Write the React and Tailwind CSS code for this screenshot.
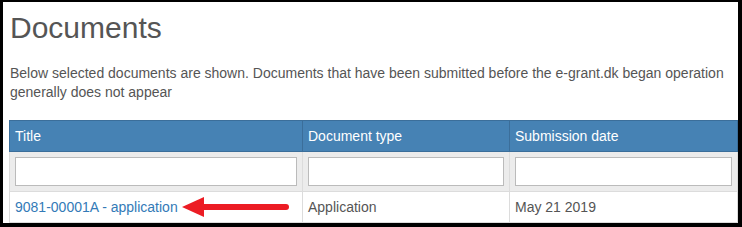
export default function App() {
  return (
    <div className="w-[742px] h-[227px] bg-black pl-[3px] pt-[2px] pr-[4px] pb-[4px]" style={{ fontFamily: '"Liberation Sans", Arial, sans-serif' }}>
      <div className="w-full h-full bg-white pl-[6px] pr-[1px] overflow-hidden">
        <h1 className="text-[30px] leading-[33px] text-[#555] pt-[9px] pl-[1px] m-0 font-normal">Documents</h1>
        <p className="text-[14px] leading-[19px] text-[#555] mt-[20px] mb-0 pl-[1px]">
          Below selected documents are shown. Documents that have been submitted before the e-grant.dk began operation generally does not appear
        </p>
        <table className="mt-[18px] w-[728px] border-collapse table-fixed text-[14px]">
          <colgroup>
            <col className="w-[293px]" />
            <col className="w-[207px]" />
            <col className="w-[228px]" />
          </colgroup>
          <thead>
            <tr className="bg-[#4682b4] text-white h-[31px]">
              <th className="text-left font-normal px-[5px] border border-[#3b6e9a]">Title</th>
              <th className="text-left font-normal px-[5px] border border-[#3b6e9a]">Document type</th>
              <th className="text-left font-normal px-[5px] border border-[#3b6e9a]">Submission date</th>
            </tr>
          </thead>
          <tbody>
            <tr className="bg-[#ececec] h-[40px]">
              <td className="px-[5px] border border-[#dcdcdc]"><div className="h-[29px] bg-white border border-[#bbb]" /></td>
              <td className="px-[5px] border border-[#dcdcdc]"><div className="h-[29px] bg-white border border-[#bbb]" /></td>
              <td className="px-[5px] border border-[#dcdcdc]"><div className="h-[29px] bg-white border border-[#bbb]" /></td>
            </tr>
            <tr className="h-[31px] bg-white">
              <td className="px-[5px] border border-[#dcdcdc] text-[#337ab7]">
                <div className="flex items-center">
                  <span>9081-00001A - application</span>
                  <svg width="110" height="22" viewBox="0 0 110 22" className="ml-[4px] shrink-0">
                    <polygon points="0,11 22,1 22,21" fill="#ec1c24" />
                    <line x1="20" y1="11" x2="104" y2="11" stroke="#ec1c24" strokeWidth="6" strokeLinecap="round" />
                  </svg>
                </div>
              </td>
              <td className="px-[5px] border border-[#dcdcdc] text-[#555]">Application</td>
              <td className="px-[5px] border border-[#dcdcdc] text-[#555]">May 21 2019</td>
            </tr>
          </tbody>
        </table>
      </div>
    </div>
  );
}
